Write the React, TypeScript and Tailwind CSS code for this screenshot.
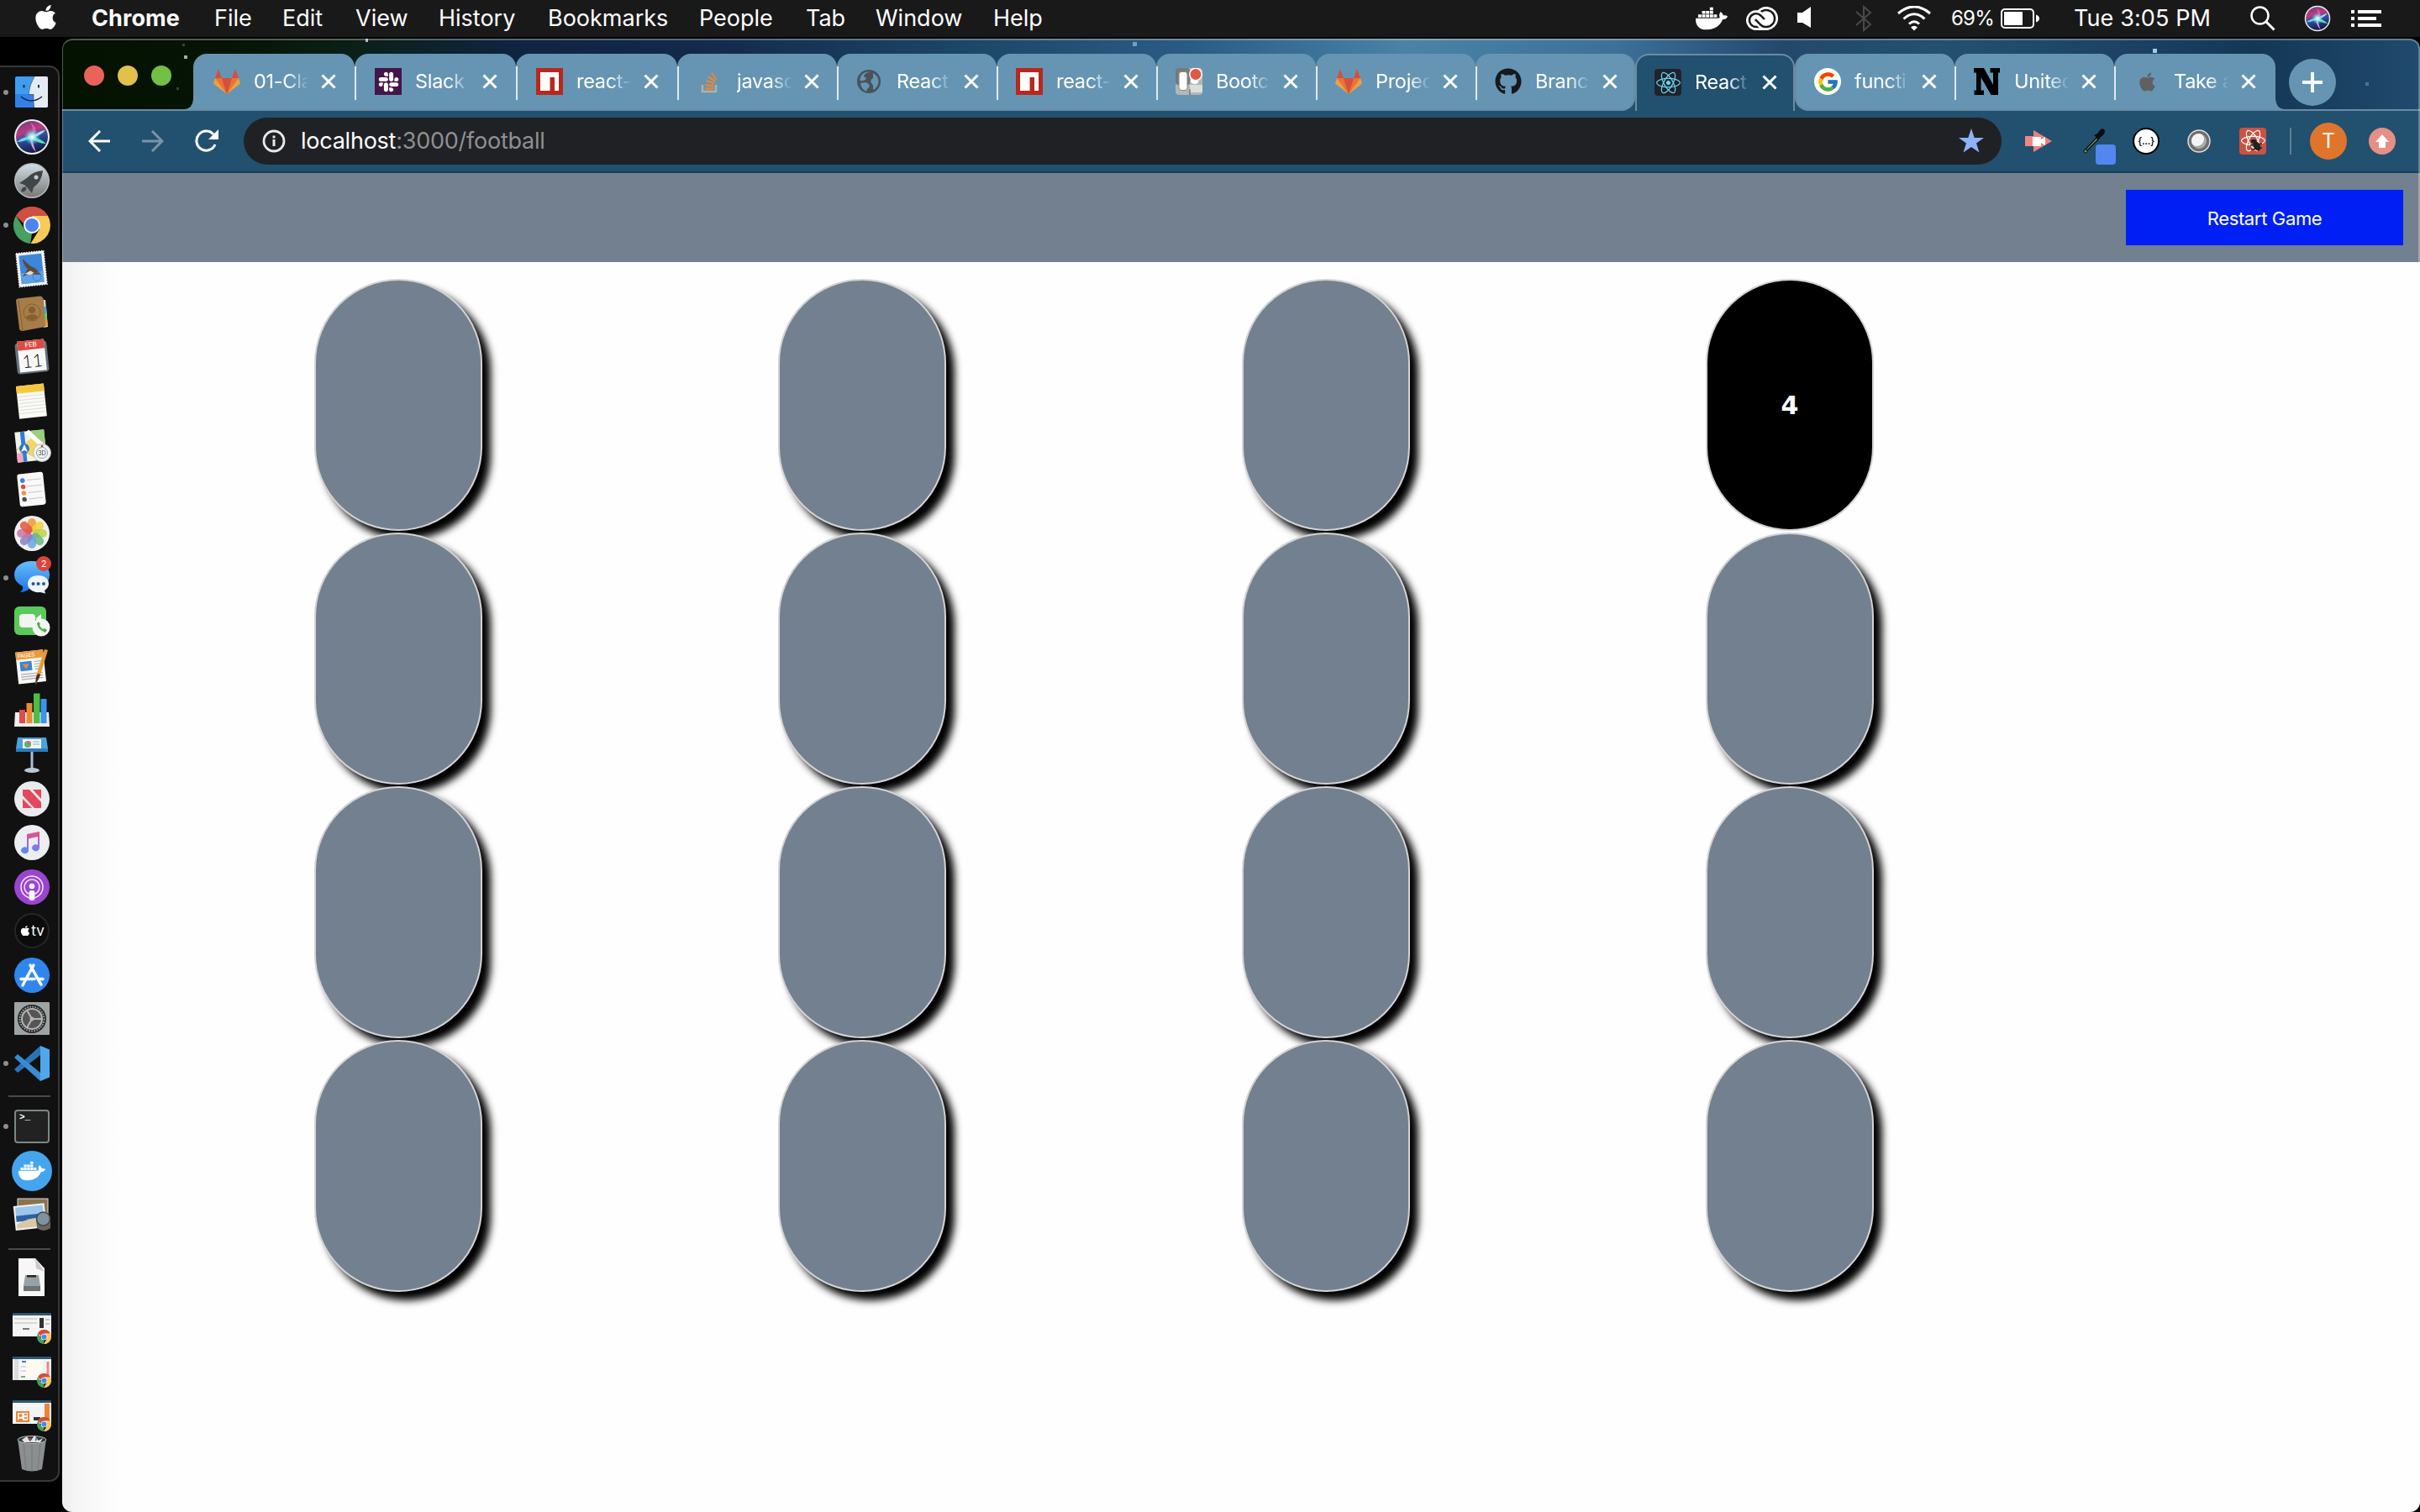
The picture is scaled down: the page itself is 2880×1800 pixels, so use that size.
import React from "react";
import { FaApple, FaDocker, FaGithub, FaReact, FaSlack } from "react-icons/fa";
import { FcGoogle } from "react-icons/fc";
import { SiAdobecreativecloud } from "react-icons/si";

const LINE = "border-[#6a8ba6]";

/* ---------- shared drawings ---------- */

function Siri({ className }: { className: string }) {
  return (
    <svg viewBox="0 0 44 44" className={className}>
      <defs>
        <linearGradient id="siriBg" x1="0.3" y1="0" x2="0.6" y2="1">
          <stop offset="0" stopColor="#6d3f86" />
          <stop offset="0.3" stopColor="#c0397f" />
          <stop offset="0.55" stopColor="#2b4f9a" />
          <stop offset="1" stopColor="#14163f" />
        </linearGradient>
        <radialGradient id="siriGlow">
          <stop offset="0" stopColor="#fff" />
          <stop offset="0.4" stopColor="#9ff0f5" stopOpacity="0.8" />
          <stop offset="1" stopColor="#3bd" stopOpacity="0" />
        </radialGradient>
      </defs>
      <circle cx="22" cy="22" r="21" fill="#eee" />
      <circle cx="22" cy="22" r="19" fill="url(#siriBg)" />
      <path d="M22 21Q10 22 4 28Q12 28 22 23Z" fill="#63d9ee" />
      <path d="M22 21Q32 24 39 30Q30 30 21 24Z" fill="#5fe0b4" />
      <path d="M22 22Q24 34 27 40Q20 34 20 23Z" fill="#e79be0" />
      <path d="M22 22Q24 10 20 5Q30 10 24 22Z" fill="#e663a8" opacity="0.8" />
      <path d="M22 22Q32 14 38 14Q33 20 23 23Z" fill="#a8dff2" />
      <circle cx="22" cy="22" r="10" fill="url(#siriGlow)" />
    </svg>
  );
}

function Chrome({ className = "", x, y, size }: { className?: string; x?: number; y?: number; size?: number }) {
  return (
    <svg viewBox="0 0 44 44" className={className} x={x} y={y} width={size} height={size}>
      <path d="M22 22L3 11A22 22 0 0 1 41 11Z" fill="#cf4f42" />
      <path d="M22 0A22 22 0 0 1 41 11H22L14 22L3 11A22 22 0 0 1 22 0Z" fill="#cf4f42" />
      <path d="M3 11L13.5 27.5L22 32L20 44A22 22 0 0 1 3 11Z" fill="#46a05f" />
      <path d="M41 11H22L31 27L20.5 44A22 22 0 0 0 41 11Z" fill="#f7cb57" />
      <circle cx="22" cy="22" r="10" fill="#fff" />
      <circle cx="22" cy="22" r="8" fill="#4a86ee" />
    </svg>
  );
}

function Gitlab() {
  return (
    <svg viewBox="0 0 32 32" className="size-8">
      <path d="M16 31L0 18.500L2 12H30L32 18.500Z" fill="#eea043" />
      <path d="M16 31L2 12H30Z" fill="#e6743b" />
      <path d="M16 31L10 12H22Z" fill="#d4503a" />
      <path d="M2 12L6 1L10 12ZM30 12L26 1L22 12Z" fill="#d4503a" />
    </svg>
  );
}

function Npm() {
  return (
    <svg viewBox="0 0 32 32" className="size-8">
      <path d="M0 0H32V32H0Z" fill="#b8281c" />
      <path d="M5 5H27V27H22V11H16.500V27H5Z" fill="#fff" />
    </svg>
  );
}

function Slack() {
  return (
    <span className="flex size-8 items-center justify-center bg-[#43154a]">
      <FaSlack className="size-[27px] text-white" />
    </span>
  );
}

function Bootcamp() {
  return (
    <svg viewBox="0 0 32 32" className="size-8">
      <rect width="32" height="32" rx="4" fill="#b4b7b6" />
      <rect width="17" height="20" rx="3" fill="#777b79" />
      <path d="M17 20H32V29H17Z" fill="#dcdedb" />
      <rect x="4" y="4.500" width="10" height="22" rx="3" fill="#fff" stroke="#888" />
      <path d="M18 8h9v8q0 3-4 3t-5-3Z" fill="#fff" />
      <path d="M17 25V32" stroke="#555" />
      <circle cx="24" cy="7.500" r="8" fill="#fff" />
      <circle cx="24" cy="7.500" r="6.500" fill="#dd5a45" />
    </svg>
  );
}

const favicons: Record<string, React.ReactNode> = {
  gitlab: <Gitlab />,
  slack: <Slack />,
  npm: <Npm />,
  so: (
    <svg viewBox="0 0 32 32" className="size-8">
      <path d="M7 20V28H23V20" fill="none" stroke="#b0b1b0" strokeWidth="2.500" />
      <path d="M10 24.500H20.500M10.300 20L20.600 21.500M11.500 15L21 18.500M14 10L22 16M18 5.500L23.500 14" stroke="#e5873e" strokeWidth="2.300" fill="none" />
    </svg>
  ),
  globe: (
    <svg viewBox="0 0 32 32" className="size-8">
      <circle cx="15" cy="16" r="14" fill="#49525b" />
      <path d="M17 5Q10 5 9 10L12 12Q10 16 4.500 15Q4 11 7 7.500Q11 3.500 17 5ZM5 18Q14 16 14 19Q17 20 15 23Q12 25 12 28Q6 25 5 18ZM20 6Q27 10 26.500 17Q25 24 20 26Q21 20 18 18Q16 14 20 12Z" fill="#6696b3" />
    </svg>
  ),
  boot: <Bootcamp />,
  github: <FaGithub className="size-8 text-[#15191c]" />,
  react: (
    <span className="flex size-8 items-center justify-center rounded bg-[#20232a]">
      <FaReact className="size-[29px] text-[#68d4f2]" />
    </span>
  ),
  google: (
    <span className="flex size-8 items-center justify-center rounded-full bg-white">
      <FcGoogle className="size-[27px]" />
    </span>
  ),
  n: (
    <svg viewBox="0 0 32 32" className="size-8">
      <path d="M0 0H12L23 20V5.500H19.500V0H31V5.500H29V32H20.500L8.500 11V26.500H12V32H0.500V26.500H3V5.500H0Z" fill="#000" />
    </svg>
  ),
  apple: <FaApple className="mr-[3px] ml-[4px] size-[25px] text-[#5f6061]" />,
};

/* ---------- menu bar ---------- */

const menus: [string, string][] = [
  ["File", "w-[81px]"],
  ["Edit", "w-[87px]"],
  ["View", "w-[99px]"],
  ["History", "w-[130px]"],
  ["Bookmarks", "w-[180px]"],
  ["People", "w-[127px]"],
  ["Tab", "w-[83px]"],
  ["Window", "w-[140px]"],
  ["Help", "w-[60px]"],
];

function MenuBar() {
  return (
    <header className="flex h-11 shrink-0 items-center bg-[#191919] text-[27px] leading-[44px] text-white">
      <FaApple className="-mt-1 mr-[38px] ml-[38px] size-[33px]" />
      <span className="w-[146px] font-bold tracking-[0.1px] whitespace-nowrap">Chrome</span>
      {menus.map(([m, w]) => (
        <span key={m} className={`${w} whitespace-nowrap`}>{m}</span>
      ))}
      <div className="ml-auto flex h-11 items-center">
        <FaDocker className="size-[38px]" />
        <SiAdobecreativecloud className="ml-[22px] size-[38px]" />
        <svg viewBox="0 0 16 26" className="-mt-0.5 ml-[23px] h-[26px] w-4">
          <path d="M0 7H6L16 0V25L6 19H0Z" fill="#fff" />
        </svg>
        <svg viewBox="0 0 20 32" className="ml-[53px] h-8 w-5">
          <path d="M1 8L18 23L10 30V2L18 9L1 24" fill="none" stroke="#4a4a4a" strokeWidth="2" />
        </svg>
        <svg viewBox="0 0 40 30" className="ml-[30px] h-[30px] w-10">
          <path d="M1 9Q20 -7 39 9M7.500 15.500Q20 4 32.500 15.500M14 21.500Q20 16 26 21.500" fill="none" stroke="#fff" strokeWidth="3" />
          <path d="M16 25.500Q20 22 24 25.500L20 29.500Z" fill="#fff" />
        </svg>
        <span className="ml-6 w-[59px] text-[24px] tracking-[-0.8px] whitespace-nowrap">69%</span>
        <svg viewBox="0 0 46 24" className="h-6 w-[46px]">
          <rect x="1" y="1" width="38" height="22" rx="4" fill="none" stroke="#fff" strokeWidth="2" />
          <rect x="4" y="4" width="22" height="16" fill="#fff" />
          <path d="M42 7.500Q46 9 46 12T42 16.500Z" fill="#fff" />
        </svg>
        <span className="ml-[41px] w-[164px] tracking-[0.1px] whitespace-nowrap">Tue 3:05 PM</span>
        <svg viewBox="0 0 30 30" className="ml-[46px] h-[30px] w-[30px]">
          <circle cx="11.500" cy="11.500" r="10" fill="none" stroke="#fff" strokeWidth="2.500" />
          <path d="M18.500 18.500L28.500 28.500" stroke="#fff" strokeWidth="3" />
        </svg>
        <Siri className="ml-[34px] size-8" />
        <svg viewBox="0 0 36 20" className="mr-[46px] ml-6 h-5 w-9">
          <path d="M0 2H4M8 2H36M0 10H4M8 10H30M0 18H4M8 18H36" stroke="#fff" strokeWidth="4" />
        </svg>
      </div>
    </header>
  );
}

/* ---------- dock ---------- */

const svg = (children: React.ReactNode) => (
  <svg viewBox="0 0 44 44" className="size-11 overflow-visible">{children}</svg>
);

const finder = svg(
  <>
    <rect x="2" y="3" width="39" height="37" rx="2" fill="#3f9cf0" />
    <path d="M2 24H41V38a2 2 0 0 1-2 2H4a2 2 0 0 1-2-2Z" fill="#3180ea" />
    <path d="M25 3H39a2 2 0 0 1 2 2V38a2 2 0 0 1-2 2H24.500Q23.500 32 24 24.500H18Q19 13 25 3Z" fill="#e4ebf3" />
    <path d="M12.500 13V16.500M30 13V16.500" stroke="#123" strokeWidth="1.800" />
    <path d="M9 27Q21 37 34 27" fill="none" stroke="#123" strokeWidth="1.500" />
    <path d="M25 3Q19 13 18 24.500H24Q23.500 32 24.500 40" fill="none" stroke="#1b3a5c" strokeWidth="0.600" />
  </>
);

const rocket = svg(
  <>
    <defs>
      <linearGradient id="rocketBg" x2="0" y2="1"><stop offset="0" stopColor="#cfdde5" /><stop offset="1" stopColor="#787878" /></linearGradient>
    </defs>
    <circle cx="22" cy="22" r="21" fill="#b8bcbe" />
    <circle cx="22" cy="22" r="19.500" fill="url(#rocketBg)" />
    <path d="M35 10Q34 23 24 30L22 37L17 31L13 27L7 25L16 19Q23 11 35 10Z" fill="#424548" />
    <path d="M15 30Q11 28 9 35Q15 36 15.500 31Z" fill="#424548" />
    <circle cx="27" cy="18" r="2.500" fill="#c3cdd2" />
  </>
);

const mail = svg(
  <g transform="rotate(-6 22 22)">
    <rect x="5" y="2" width="33" height="40" fill="#f3f3f3" stroke="#fff" strokeWidth="1.500" strokeDasharray="1.500 1.500" />
    <rect x="8" y="5" width="27" height="34" fill="#3c86dc" />
    <path d="M8 26H35V39H8Z" fill="#5ea2e6" />
    <path d="M12 9Q18 16 20 18L26 22L32 30L24 29L20 27L10 30L17 22Q12 16 12 9Z" fill="#5d4a3a" />
    <path d="M13 27L20 24L24 27L19 29Z" fill="#e8dcc8" />
    <circle cx="27" cy="32" r="5" fill="none" stroke="#3a6fae" strokeWidth="0.700" />
  </g>
);

const contacts = svg(
  <>
    <path d="M34 6L38 6L41 38L36 39Z" fill="#ddd" />
    <path d="M36 14H39L40 22H36Z" fill="#3fa7dc" /><path d="M36 22H40V30H36Z" fill="#6ccb5a" /><path d="M36 30H40L41 37H36Z" fill="#e8962f" />
    <path d="M3 7Q3 5 5 4.500L32 1.500Q35 2 36 6L38 38L11 43Q7 43 7 40Z" fill="#a67c48" />
    <path d="M6 7L11 42" stroke="#84602f" strokeWidth="1" />
    <circle cx="22" cy="21" r="10" fill="none" stroke="#84602f" />
    <circle cx="22" cy="18" r="4" fill="#84602f" /><path d="M14.500 27Q22 20 29.500 26Q23 34 14.500 27Z" fill="#84602f" />
  </>
);

const calendar = (
  <span className="relative flex size-11 items-center justify-center">
    <span className="absolute top-1 left-[3px] h-[37px] w-[38px] -rotate-6 rounded-sm bg-[#68727a]" />
    <span className="relative -mt-1 flex h-[37px] w-[32px] -rotate-6 flex-col items-center bg-[#f8f8f8] font-['Lato',sans-serif] text-black">
      <span className="h-[11px] w-full bg-[#dc4b45] text-center text-[8px] leading-[11px] text-white">FEB</span>
      <span className="text-[21px] leading-[25px] font-light">11</span>
    </span>
  </span>
);

const notes = svg(
  <g transform="rotate(-6 22 22)">
    <rect x="5" y="2" width="33" height="39" fill="#fafaf6" />
    <rect x="5" y="2" width="33" height="9" fill="#f6c83c" />
    <path d="M6 15H37M6 19H37M6 23H37M6 27H37M6 31H37M6 35H37" stroke="#d0d0cc" strokeWidth="0.700" />
  </g>
);

const maps = svg(
  <>
    <g transform="rotate(-6 20 22)">
      <rect x="3" y="5" width="35" height="36" fill="#f4f1e6" />
      <path d="M18 5H38V23Z" fill="#9bd078" /><path d="M3 25L22 14L38 32V41H30Z" fill="#f4d660" />
      <path d="M18 5L38 28" stroke="#fff" strokeWidth="5" />
      <path d="M12 5V41" stroke="#2b7fdb" strokeWidth="5" /><path d="M3 30H10V41H3Z" fill="#f5a7bb" />
    </g>
    <circle cx="13" cy="26" r="6" fill="#2878d8" /><path d="M13 21L17 30L13 28L9 30Z" fill="#fff" />
    <circle cx="34" cy="31" r="10.500" fill="#f3f3f3" stroke="#bbb" />
    <circle cx="34" cy="31" r="6.500" fill="none" stroke="#7fa8bb" />
    <text x="34" y="33.500" fontSize="7" textAnchor="middle" fill="#444">3D</text>
    <circle cx="34" cy="23" r="1.300" fill="#e03030" />
  </>
);

const reminders = svg(
  <g transform="rotate(-6 22 22)">
    <rect x="6" y="2" width="31" height="39" rx="3" fill="#f9f9f9" />
    {["#3b7cf0", "#d8503f", "#e9993c", "#4c5157"].map((c, i) => (
      <g key={c}>
        <circle cx="12" cy={10 + i * 7.500} r="2.800" fill={c} />
        <path d={`M17 ${10 + i * 7.500}H34`} stroke="#bbb" strokeWidth="0.800" />
      </g>
    ))}
  </g>
);

const photos = svg(
  <>
    <circle cx="22" cy="22" r="21" fill="#f1f1f1" />
    {["#f09a35", "#f2d338", "#bcd34d", "#6db97b", "#67a8dd", "#8b80c4", "#c676a8", "#e4563f"].map((c, i) => (
      <rect key={c} x="17" y="4" width="10" height="17" rx="5" fill={c} opacity="0.85" transform={`rotate(${i * 45} 22 22)`} />
    ))}
  </>
);

const messages = (
  <span className="relative mt-0.5">
    {svg(
      <>
        <defs><linearGradient id="msg" x2="0" y2="1"><stop offset="0" stopColor="#67bff8" /><stop offset="1" stopColor="#1c72ee" /></linearGradient></defs>
        <path d="M22 1C35 1 43 8 43 17.500S35 34 22 34L19 34Q14 38 8 38Q12 35 11 31Q1 26 1 17.500C1 8 9 1 22 1Z" fill="url(#msg)" />
        <path d="M29.500 18C37 18 42 22 42 28C42 31 40 34 37 36L38 39.500L32 38C23 39 17 34 17 28S22 18 29.500 18Z" fill="#eef4fb" />
        <g fill="#1b559f"><circle cx="23.500" cy="28" r="2" /><circle cx="29.500" cy="28" r="2" /><circle cx="36" cy="28" r="2" /></g>
      </>
    )}
    <span className="absolute -top-[5px] -right-[1px] flex size-[18px] items-center justify-center rounded-full bg-[#dc4437] text-[11px] text-white">2</span>
  </span>
);

const facetime = svg(
  <>
    <rect x="1" y="4" width="38" height="34" rx="6" fill="#5bc95a" />
    <rect x="7" y="13" width="19" height="16" rx="4" fill="#f3f3f3" /><path d="M27 18L33 13V26L27 24Z" fill="#f3f3f3" />
    <circle cx="33" cy="29" r="10.500" fill="#f5f5f5" />
    <path d="M28 24Q28 31 38 35L40 32L37 30L35 31Q32 29 31 26L32 25L30 22Z" fill="#49b24a" />
  </>
);

const pages = svg(
  <>
    <g transform="rotate(-6 20 22)">
      <rect x="4" y="4" width="33" height="38" fill="#f8f8f6" />
      <rect x="4" y="4" width="33" height="9" fill="#ea9a3b" />
      <rect x="8" y="16" width="14" height="11" fill="#3a83d8" /><path d="M11 19H19L15 25Z" fill="#ef8a30" />
      <path d="M25 17H34M25 20H34M25 23H34M25 26H34M8 31H34M8 34H34M8 37H34" stroke="#aaa" strokeWidth="1.200" />
      <text x="6" y="11" fontSize="6.500" fill="#fff">PAGES</text>
    </g>
    <path d="M37 2L41 3L31 36L26 44L27 34Z" fill="#e99a34" /><path d="M29 31L32 32L30 37L26 44L27 35Z" fill="#333" />
  </>
);

const numbers = svg(
  <>
    <path d="M2 25H42L43 42H1Z" fill="#eee" />
    <rect x="7" y="22" width="7" height="16" fill="#dd4c4d" /><rect x="15.500" y="14" width="7" height="24" fill="#e98a35" />
    <rect x="24" y="2.500" width="7.500" height="35.500" fill="#50bb45" /><rect x="32.500" y="9" width="7" height="29" fill="#3c93ee" />
  </>
);

const keynote = svg(
  <>
    <path d="M5 2H39L41 15H3Z" fill="#4aa3df" /><path d="M3 15H41V19H3Z" fill="#2f7cb8" />
    <rect x="11" y="4" width="22" height="11" fill="#f2f6f8" /><circle cx="17" cy="10" r="4" fill="#5fb46a" /><path d="M17 6a4 4 0 0 1 4 4H17Z" fill="#e35ba0" /><path d="M23 7H31M23 10H31" stroke="#9ab" />
    <rect x="20.500" y="19" width="3" height="21" fill="#aebfca" /><ellipse cx="22" cy="41" rx="9" ry="3" fill="#b4cbd6" />
  </>
);

const disc = (fill: string, children: React.ReactNode) => svg(
  <>
    <circle cx="22" cy="22" r="21" fill={fill} />
    {children}
  </>
);

const news = disc("#e9ebee", <><path d="M11 11H19L33 26V33H25L11 18Z" fill="#e2485e" /><path d="M23 11H33V22ZM11 22L22 33H11Z" fill="#e2485e" /></>);
const music = disc(
  "#eceef2",
  <>
    <defs><linearGradient id="mus" x2="0" y2="1"><stop offset="0" stopColor="#f0506e" /><stop offset="0.500" stopColor="#a765e0" /><stop offset="1" stopColor="#4496f5" /></linearGradient></defs>
    <path d="M16 12L31 9V28A4.500 4 0 1 1 29 25V15L18 17.500V31A4.500 4 0 1 1 16 28Z" fill="url(#mus)" />
  </>
);
const podcasts = disc("#9a45d0", <><circle cx="22" cy="22" r="13" fill="none" stroke="#f2e6fa" strokeWidth="1.500" /><circle cx="22" cy="22" r="9" fill="none" stroke="#f2e6fa" strokeWidth="1.500" /><path d="M18 28H26L25 39H19Z" fill="#9a45d0" /><circle cx="22" cy="21" r="3.300" fill="#fff" /><rect x="18.500" y="26" width="7" height="12" rx="3" fill="#fff" /></>);
const appstore = disc("#2f87ee", <path d="M24 10L13 30M20 10L31 30M9 26.500H25M30 26.500H35M12 32L11 34M31 30L33 33" stroke="#fff" strokeWidth="3.500" strokeLinecap="round" fill="none" />);
const tv = (
  <span className="flex size-[42px] items-center justify-center rounded-full border-2 border-[#262626] bg-[#0c0c0c] text-[17px] leading-none text-white">
    <FaApple className="size-[14px]" />tv
  </span>
);
const settings = svg(
  <>
    <rect x="1" y="2" width="42" height="39" rx="1" fill="#9ea3a6" />
    <circle cx="22" cy="22" r="17" fill="#222" />
    <circle cx="22" cy="22" r="14.500" fill="none" stroke="#9a9a9a" strokeWidth="2" strokeDasharray="1.800 1.300" />
    <circle cx="22" cy="22" r="12" fill="#555" stroke="#b5b5b5" strokeWidth="2" />
    <path d="M22 22H34M22 22L16 11.500M22 22L16 32.500" stroke="#b5b5b5" strokeWidth="2" /><circle cx="22" cy="22" r="2.500" fill="#b5b5b5" />
  </>
);
const vscode = svg(
  <>
    <path d="M1 29L5 33L32 12V1Z" fill="#2b73b5" /><path d="M1 15L5 11L32 33V43Z" fill="#3a8ad0" />
    <path d="M32 1L43 5.500V38.500L32 43Z" fill="#4fa8ea" />
  </>
);
const terminal = (
  <span className="flex h-10 w-[42px] rounded-sm border-2 border-[#7b8785] bg-[#222] pl-1 font-['Liberation_Mono'] text-[11px] leading-[15px] font-bold text-white">&gt;_</span>
);
const docker = (
  <span className="flex size-12 items-center justify-center rounded-full bg-[#44a5ee]">
    <FaDocker className="size-8 text-white" />
  </span>
);
const preview = svg(
  <>
    <rect x="5" y="2" width="36" height="28" fill="#8a744c" stroke="#ddd" />
    <g transform="rotate(-6 20 22)"><rect x="1" y="9" width="37" height="29" fill="#f2f2f2" /><rect x="3" y="11" width="33" height="12" fill="#9cc6ea" /><rect x="3" y="21" width="33" height="7" fill="#2b62a6" /><path d="M3 31Q18 24 36 26V36H3Z" fill="#d8c8a4" /></g>
    <path d="M27 26H44V37Q36 43 28 37Z" fill="#6c655c" /><circle cx="35.500" cy="26" r="8" fill="#7c93a4" stroke="#444" strokeWidth="1.500" />
  </>
);
const diskDoc = svg(
  <>
    <path d="M6 0H26L37 12V45H6Z" fill="#f7f7f7" /><path d="M26 0L37 16L27 12Z" fill="#c9c9c9" />
    <path d="M14 20H30L32 33V39H12V33Z" fill="#98a1a5" /><path d="M12 33H32V39H12Z" fill="#6b7377" /><rect x="16" y="20" width="11" height="2.500" fill="#222" />
  </>
);
const thumb = (kind: number) => svg(
  <>
    <rect x="-1" y="2" width="46" height="28" fill="#f4f4f4" />
    <rect x="-1" y="2" width="46" height="3" fill="#2c5870" />
    {kind === 0 && <><path d="M1 9H28M1 14H28" stroke="#bbb" /><rect x="31" y="8" width="5" height="12" fill="#333" /><path d="M38 10H43M38 15H43" stroke="#999" /><rect x="11" y="20" width="8" height="2" fill="#777" /></>}
    {kind === 1 && <><rect x="1" y="5" width="5" height="25" fill="#ddd" /><rect x="9" y="6" width="26" height="22" fill="#fdfaf0" /><path d="M10 8H15" stroke="#4472e8" strokeWidth="2" /><path d="M9 14H15M9 19H15" stroke="#b9b0f0" /><path d="M9 26H14" stroke="#6b6" strokeWidth="2" /><path d="M41 8V24" stroke="#e88" strokeWidth="3" /></>}
    {kind === 2 && <><rect x="37" y="6" width="6" height="22" fill="#ee8434" /><rect x="4" y="16" width="14" height="11" fill="none" stroke="#ee8434" strokeWidth="2" /><circle cx="8.500" cy="20" r="2" fill="#ee8434" /><path d="M6 25H11M13 19H16M13 23H16" stroke="#ee8434" strokeWidth="2" /><rect x="24" y="22" width="8" height="4" fill="#333" /></>}
    <Chrome x={28} y={22} size={17} />
  </>
);
const trash = svg(
  <>
    <path d="M5 5H39L34 41Q22 46 10 41Z" fill="#8b8f90" /><path d="M12 8L15 42M22 9V43M32 8L29 42" stroke="#7c8081" strokeWidth="1.500" />
    <ellipse cx="22" cy="6" rx="17" ry="4.500" fill="#3a3d3e" stroke="#b5b9ba" />
    <path d="M10 6L16 2L20 8L25 1L30 7L35 4L32 9H13Z" fill="#e3e5e6" /><path d="M17 5L21 4L20 8Z" fill="#b4503a" /><path d="M26 4L29 5L26 8Z" fill="#3f7fae" />
  </>
);

type DockItem = { icon: React.ReactNode; open?: boolean };
const apps: DockItem[] = [
  { icon: finder, open: true }, { icon: <Siri className="size-11" /> }, { icon: rocket },
  { icon: <Chrome className="size-11" />, open: true }, { icon: mail }, { icon: contacts }, { icon: calendar },
  { icon: notes }, { icon: maps }, { icon: reminders }, { icon: photos }, { icon: messages, open: true },
  { icon: facetime }, { icon: pages }, { icon: numbers }, { icon: keynote }, { icon: news }, { icon: music },
  { icon: podcasts }, { icon: tv }, { icon: appstore }, { icon: settings }, { icon: vscode, open: true },
];

function Slot({ icon, open }: DockItem) {
  return (
    <div className="flex min-h-0 flex-1 items-center">
      <span className={`ml-1 size-1.5 shrink-0 rounded-full ${open ? "bg-[#8e8e8e]" : "bg-transparent"}`} />
      <span className="flex w-14 shrink-0 items-center justify-center">{icon}</span>
    </div>
  );
}

function Dock() {
  return (
    <aside className="mt-[34px] flex h-[1686px] w-[71px] shrink-0 flex-col rounded-r-xl border-y-2 border-r-2 border-[#383838] bg-[#111112] pt-1">
      <div className="flex h-[1208px] flex-col">{apps.map((a, i) => <Slot key={i} {...a} />)}</div>
      <div className="mt-3 ml-2.5 h-0.5 w-[50px] bg-[#4a4a4a]" />
      <div className="mt-[9px] flex h-[158px] flex-col">
        <Slot icon={terminal} open />
        <Slot icon={docker} />
        <Slot icon={preview} />
      </div>
      <div className="mt-[13px] ml-2.5 h-0.5 w-[50px] bg-[#4a4a4a]" />
      <div className="mt-[6px] flex h-[52px] flex-col"><Slot icon={diskDoc} /></div>
      <div className="mt-[11px] flex h-[156px] flex-col">
        <Slot icon={thumb(0)} />
        <Slot icon={thumb(1)} />
        <Slot icon={thumb(2)} />
      </div>
      <div className="-mt-[9px] flex h-[52px] flex-col"><Slot icon={trash} /></div>
    </aside>
  );
}

/* ---------- browser ---------- */

const tabs: [string, string][] = [
  ["gitlab", "01-Cla"], ["slack", "Slack"], ["npm", "react-"], ["so", "javasc"], ["globe", "React"],
  ["npm", "react-"], ["boot", "Bootc"], ["gitlab", "Projec"], ["github", "Branc"], ["react", "React"],
  ["google", "functi"], ["n", "United"], ["apple", "Take a"],
];
const ACTIVE = 9;

function Cross() {
  return (
    <svg viewBox="0 0 18 18" className="size-[18px] shrink-0">
      <path d="M1.500 1.500L16.500 16.500M16.500 1.500L1.500 16.500" stroke="#fff" strokeWidth="3" />
    </svg>
  );
}

function Tab({ icon, title, i }: { icon: string; title: string; i: number }) {
  const active = i === ACTIVE;
  const width = i < 3 || i === 12 ? "w-48" : "w-[190px]";
  const shape = active
    ? `z-0 rounded-t-2xl border-t-2 border-x-2 pb-0.5 ${LINE} bg-[#22506f]`
    : `z-10 rounded-t-2xl border-b-2 ${LINE} bg-[#6595b3] ${i === ACTIVE - 1 ? "rounded-br-2xl border-r-2" : ""} ${i === ACTIVE + 1 ? "rounded-bl-2xl border-l-2" : ""}`;
  const inset = active || i === ACTIVE + 1 ? "pl-[21px]" : i < 3 ? "pl-6" : "pl-[23px]";
  return (
    <div className={`relative ${width}`}>
      {active && <span className="absolute bottom-0 -left-4 h-4 w-[222px] bg-[#22506f]" />}
      <div className={`relative flex h-[68px] items-center ${inset} ${shape}`}>
        <span className="w-12 shrink-0">{favicons[icon]}</span>
        <span className="w-[80px] shrink-0 text-[23.5px] tracking-[-0.3px] whitespace-nowrap text-white [mask-image:linear-gradient(90deg,#000_50%,transparent_82%)]">{title}</span>
        <Cross />
      </div>
      {i > 0 && i !== ACTIVE && i !== ACTIVE + 1 && <span className="absolute top-[15px] left-0 z-20 h-10 w-0.5 bg-[#dfeaf1]" />}
    </div>
  );
}

function TabStrip() {
  return (
    <div className="relative flex h-[86px] shrink-0 items-end bg-[linear-gradient(90deg,#041202_0%,#051404_7%,#0a2016_12%,#0f2440_19%,#12294a_27%,#1d4566_38%,#2b5c86_48%,#4a83a6_57%,#3c7098_66%,#24486c_73%,#24506f_80%,#1e4468_86%,#143755_93%,#204a6e_100%)]">
      <span className="absolute bottom-0 left-0 h-0.5 w-full bg-[#6a8ba6]" />
      <span className="absolute top-5 left-[145px] size-1 bg-[#9fae9f]" />
      <span className="absolute top-[58px] left-[136px] size-[3px] bg-[#34453a]" />
      <span className="absolute top-[6px] left-[143px] size-[3px] bg-[#34453a]" />
      <span className="absolute top-0 left-[361px] h-1 w-[3px] bg-[#a9bccb]" />
      <span className="absolute top-1 left-[1274px] size-[5px] bg-[#6aa5c0]" />
      <span className="absolute top-[12px] left-[2488px] size-[5px] bg-[#9ed0e0]" />
      <span className="absolute top-[52px] left-[2741px] size-1 bg-[#44759a]" />
      <div className="relative flex h-full w-[156px] shrink-0 items-center gap-4 pt-0.5 pl-[26px]">
        <span className="size-6 rounded-full bg-[#ea6358]" />
        <span className="size-6 rounded-full bg-[#e2c04c]" />
        <span className="size-6 rounded-full bg-[#71c147]" />
        <svg viewBox="0 0 10 12" className="absolute right-0 bottom-0.5 h-3 w-2.5"><path d="M10 0V12H0Q9 11 10 0Z" fill="#6595b3" /></svg>
      </div>
      {tabs.map(([icon, title], i) => <Tab key={i} icon={icon} title={title} i={i} />)}
      <svg viewBox="0 0 10 12" className="relative mb-0.5 h-3 w-2.5 shrink-0"><path d="M0 0V12H10Q1 11 0 0Z" fill="#6595b3" /></svg>
      <span className="relative mb-[6px] ml-[6px] flex size-14 shrink-0 items-center justify-center rounded-full bg-[#6595b3]">
        <svg viewBox="0 0 24 24" className="size-6"><path d="M12 0V24M0 12H24" stroke="#fff" strokeWidth="4" /></svg>
      </span>
    </div>
  );
}

function Toolbar() {
  return (
    <div className="flex h-[74px] shrink-0 items-center border-b-2 border-[#183d57] bg-[#22506f]">
      <svg viewBox="0 0 26 26" className="ml-[31px] size-[26px]"><path d="M26 13H2M14 1L2 13L14 25" fill="none" stroke="#fff" strokeWidth="3" /></svg>
      <svg viewBox="0 0 26 26" className="ml-[38px] size-[26px]"><path d="M0 13H24M12 1L24 13L12 25" fill="none" stroke="#7894a9" strokeWidth="3" /></svg>
      <svg viewBox="0 0 28 28" className="ml-[37px] size-7"><path d="M24 18A11.500 11.500 0 1 1 22 6" fill="none" stroke="#fff" strokeWidth="3" /><path d="M28 0V12H16Z" fill="#fff" /></svg>
      <div className="ml-[30px] flex h-14 w-[2092px] items-center rounded-full bg-[#202124] pr-5 pl-[22px]">
        <svg viewBox="0 0 28 28" className="size-7"><circle cx="14" cy="14" r="12" fill="none" stroke="#e8e8e8" strokeWidth="2.800" /><path d="M14 12V20M14 7.500V10.500" stroke="#e8e8e8" strokeWidth="3" /></svg>
        <span className="ml-[18px] text-[27px] tracking-[-0.240px] text-[#8f9092]"><span className="text-white">localhost</span>:3000/football</span>
        <svg viewBox="0 0 32 32" className="ml-auto size-8"><path d="M16 1L19.700 12H31L22 18.500L25.500 29.500L16 23L6.500 29.500L10 18.500L1 12H12.300Z" fill="#8db3f7" /></svg>
      </div>
      <svg viewBox="0 0 32 32" className="ml-7 size-8"><path d="M0 10H10V22H0Z" fill="#f08784" /><path d="M10 3L32 16L10 29Z" fill="#ee7f7d" /><path d="M9 11H19V14L24 11V21L19 18V22H9Z" fill="#fff" /></svg>
      <div className="relative ml-9 h-14 w-10">
        <svg viewBox="0 0 30 32" className="absolute top-3 left-0 h-8 w-[30px]"><path d="M3 27L17 12L19 14L6 27Z" fill="#7db37f" stroke="#111" strokeWidth="1.500" /><path d="M14 9L20 14L21 12Q27 8 27 4Q26 0 22 2L18 7Z" fill="#0d0d0d" /><circle cx="4" cy="28" r="2" fill="#5fa36a" stroke="#111" /></svg>
        <span className="absolute right-0 bottom-0 size-6 rounded bg-[#5187ee]" />
      </div>
      <span className="ml-5 flex size-8 items-center justify-center rounded-full border-2 border-black bg-white text-[12px] font-medium tracking-[-0.300px] text-black">{"{...}"}</span>
      <svg viewBox="0 0 28 28" className="ml-[33px] size-7"><circle cx="14" cy="14" r="13" fill="#6e6e6e" stroke="#ddd" strokeWidth="1.500" /><circle cx="14" cy="14" r="9" fill="#aaa" /><ellipse cx="12.500" cy="12.500" rx="8" ry="7" transform="rotate(-45 12.500 12.500)" fill="#f4f4f4" /></svg>
      <span className="relative ml-[34px] flex size-8 items-center justify-center rounded-sm bg-[#cc5240]">
        <FaReact className="-mt-0.5 size-[29px] text-white" />
        <svg viewBox="0 0 16 16" className="absolute right-[4px] bottom-[3px] size-4"><ellipse cx="9" cy="9" rx="4" ry="6" transform="rotate(-30 9 9)" fill="#222" /><circle cx="4.500" cy="3" r="2.800" fill="#222" /><path d="M1 8L15 6M2 13L15 11M7 1L11 15" stroke="#222" strokeWidth="1.500" /></svg>
      </span>
      <span className="ml-7 h-8 w-0.5 bg-[#5d7f97]" />
      <span className="ml-[22px] flex size-11 items-center justify-center rounded-full bg-[#df752b] text-[24px] text-white">T</span>
      <span className="ml-[26px] flex size-8 items-center justify-center rounded-full bg-[#e58f86]">
        <svg viewBox="0 0 16 16" className="size-4"><path d="M8 0L16 9H12V16H4V9H0Z" fill="#fff" /></svg>
      </span>
    </div>
  );
}

const cards = Array.from({ length: 16 }, (_, i) => (i === 3 ? "4" : ""));

function Game() {
  return (
    <main className="flex-1 bg-[#fefefe] bg-[linear-gradient(90deg,rgba(0,0,0,0.06),rgba(0,0,0,0.02)_35px,transparent_75px)]">
      <div className="flex h-[106px] items-center justify-end bg-[#73808f] pr-5">
        <button className="h-[66px] w-[330px] bg-[#001ff5] pt-0.5 text-[22px] tracking-[-0.350px] text-white">Restart Game</button>
      </div>
      <div className="grid grid-cols-[repeat(4,200px)] gap-x-[352px] gap-y-0.5 pt-5 pl-[300px]">
        {cards.map((label, i) => (
          <div
            key={i}
            className={`flex h-[300px] items-center justify-center rounded-[100px] border-2 border-[#d3d3d3] font-['DejaVu_Sans',sans-serif] text-[30px] font-bold text-white ${label ? "bg-black" : "bg-[#73808f] shadow-[10px_10px_10px_black]"}`}
          >
            {label}
          </div>
        ))}
      </div>
    </main>
  );
}

export default function App() {
  return (
    <div className="flex h-[1800px] w-[2880px] flex-col overflow-hidden bg-black font-['Inter','Liberation_Sans',sans-serif]">
      <MenuBar />
      <div className="flex min-h-0 flex-1">
        <Dock />
        <div className="relative mt-0.5 ml-[3px] flex flex-1 flex-col overflow-hidden rounded-xl">
          <TabStrip />
          <Toolbar />
          <Game />
          <span className="pointer-events-none absolute inset-0 z-30 rounded-xl border-t-2 border-r-2 border-l border-white/30" />
        </div>
      </div>
    </div>
  );
}
